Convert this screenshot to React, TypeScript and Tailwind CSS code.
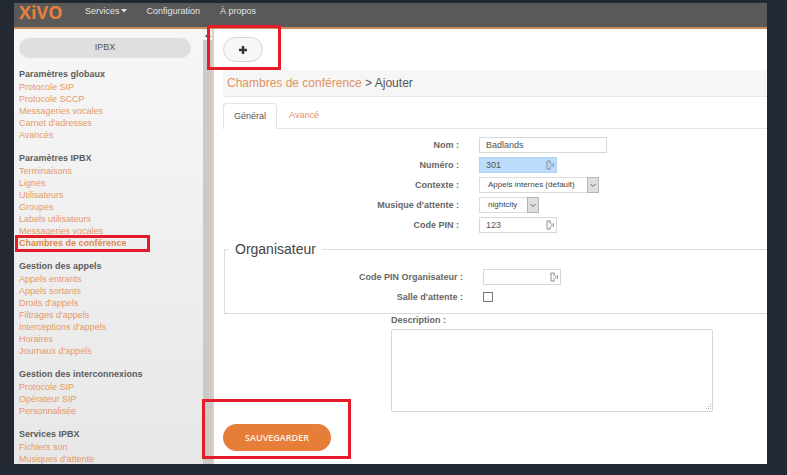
import type { ReactNode } from "react";

const menu = [
  {
    title: "Paramètres globaux",
    links: ["Protocole SIP", "Protocole SCCP", "Messageries vocales", "Carnet d'adresses", "Avancés"],
  },
  {
    title: "Paramètres IPBX",
    links: [
      "Terminaisons",
      "Lignes",
      "Utilisateurs",
      "Groupes",
      "Labels utilisateurs",
      "Messageries vocales",
      "Chambres de conférence",
    ],
  },
  {
    title: "Gestion des appels",
    links: [
      "Appels entrants",
      "Appels sortants",
      "Droits d'appels",
      "Filtrages d'appels",
      "Interceptions d'appels",
      "Horaires",
      "Journaux d'appels",
    ],
  },
  { title: "Gestion des interconnexions", links: ["Protocole SIP", "Opérateur SIP", "Personnalisée"] },
  { title: "Services IPBX", links: ["Fichiers son", "Musiques d'attente"] },
];

const ACTIVE = "Chambres de conférence";

function Row({ id, label, children }: { id: string; label: string; children: ReactNode }) {
  return (
    <div className="flex h-5 items-center">
      <label htmlFor={id} className="w-64 shrink-0 pt-0.5 pr-5 text-right text-[9px] font-bold text-[#666]">
        {label}
      </label>
      {children}
    </div>
  );
}

function Keypad({ id, value, active }: { id: string; value: string; active?: boolean }) {
  return (
    <div className="relative w-[78px]">
      <input
        id={id}
        type="text"
        defaultValue={value}
        className={
          active
            ? "block h-4 w-full border border-[#b4d3f2] bg-[#bbdcfb] px-1.5 text-[9px] text-[#555] outline-none"
            : "block h-4 w-full border border-[#d8d8d8] bg-white px-1.5 text-[9px] text-[#555] outline-none"
        }
      />
      <svg
        viewBox="0 0 8 10"
        className="pointer-events-none absolute top-[3px] right-[3px] h-[10px] w-2"
        fill="none"
        stroke="#8a8f96"
        aria-hidden="true"
      >
        <path d="M4.5 1H1v8h3.5M4 1v2M4 7.5V9" />
        <path d="M3.5 3.2h1L6.5 5 4.5 6.8h-1M7.4 3v4" strokeWidth="0.9" />
      </svg>
    </div>
  );
}

function Picker({ id, value, wide }: { id: string; value: string; wide?: boolean }) {
  return (
    <div className={wide ? "relative w-[120px]" : "relative w-[60px]"}>
      <select
        id={id}
        className="block h-4 w-full appearance-none border border-[#dcdcdc] bg-white pr-3 pl-2 text-[8px] leading-[14px] text-[#444] outline-none"
      >
        <option>{value}</option>
      </select>
      <span className="pointer-events-none absolute inset-y-0 right-0 flex w-3 items-center justify-center border border-[#b5b5b5] bg-[#dedede]">
        <svg viewBox="0 0 8 5" className="h-[5px] w-2" fill="none" stroke="#666" aria-hidden="true">
          <path d="M1.5 1 4 3.5 6.5 1" />
        </svg>
      </span>
    </div>
  );
}

export default function App() {
  return (
    <div className="flex min-h-screen flex-col bg-[#232933] pt-[3px] pr-5 pb-[11px] pl-3.5 font-['Liberation_Sans',Arial,sans-serif] text-[#555]">
      <header className="flex h-[26px] items-start border-b-2 border-[#c98a5c] bg-[#595959] pl-[5px]">
        <a href="#accueil" className="w-[66px] font-['Open_Sans',sans-serif] text-[18px] leading-[18px] font-bold text-[#e8803c]">
          XiVO
        </a>
        <nav className="flex gap-5 text-[9px] leading-[16px] text-[#e4e4e4]">
          <button type="button" className="flex items-center gap-px">
            Services
            <svg viewBox="0 0 6 4" className="h-1 w-1.5" fill="currentColor" aria-hidden="true">
              <path d="M0 0h6L3 3.5z" />
            </svg>
          </button>
          <a href="#configuration">Configuration</a>
          <a href="#apropos">À propos</a>
        </nav>
      </header>

      <div className="flex flex-1 bg-white">
        <aside className="flex w-[200px] shrink-0 border-r-2 border-[#e3cdb8] bg-linear-to-b from-[#f7f7f7] to-[#e7e7e7]">
          <div className="flex-1 pt-[9px] pl-[5px]">
            <button
              type="button"
              className="mb-[9px] block h-5 w-[172px] rounded-full bg-[#dfdfdf] text-center text-[9px] text-[#555]"
            >
              IPBX
            </button>
            {menu.map((group) => (
              <section key={group.title} className="mb-2.5 last:-mb-px">
                <h2 className="text-[9px] leading-[14px] font-bold text-[#5c5c5c]">{group.title}</h2>
                <ul className="text-[9px] leading-3 text-[#e59a68]">
                  {group.links.map((link) => (
                    <li key={link} className="relative">
                      <a href="#menu" className={link === ACTIVE ? "font-bold text-[#dd8850]" : ""}>
                        {link}
                      </a>
                      {link === ACTIVE && (
                        <span className="pointer-events-none absolute -top-0.5 -left-1 h-[17px] w-[135px] border-3 border-[#e31b2b]" />
                      )}
                    </li>
                  ))}
                </ul>
              </section>
            ))}
          </div>
          <div className="w-[9px] bg-[#cacaca]">
            <div className="flex h-[11px] items-center justify-center bg-[#f1f1f1]">
              <svg viewBox="0 0 6 4" className="h-1 w-1.5" fill="#444" aria-hidden="true">
                <path d="M0 4h6L3 0z" />
              </svg>
            </div>
          </div>
        </aside>

        <main className="min-w-0 flex-1 pl-[9px]">
          <div className="flex h-[41px] pt-2">
            <div className="relative h-[25px]">
              <button
                type="button"
                aria-label="Ajouter"
                className="flex h-[25px] w-10 items-center justify-center rounded-full border border-[#d5d5d5] bg-[#f7f7f7]"
              >
                <svg viewBox="0 0 8 8" className="size-2" fill="#333" aria-hidden="true">
                  <path d="M2.8 0h2.4v2.8H8v2.4H5.2V8H2.8V5.2H0V2.8h2.8z" />
                </svg>
              </button>
              <span className="pointer-events-none absolute -top-3 -left-4 h-[45px] w-[74px] border-3 border-[#e31b2b]" />
            </div>
          </div>

          <h1 className="h-[27px] border-b border-[#e8e8e8] bg-[#f6f6f6] pl-1 text-[12px] leading-[26px] text-[#555]">
            <a href="#chambres" className="text-[#e0935f]">
              Chambres de conférence
            </a>{" "}
            &gt; Ajouter
          </h1>

          <div className="mt-1.5 flex h-[26px] border-b border-[#e6e6e6] text-[9px]">
            <button
              type="button"
              className="-mb-px w-[54px] rounded-t-sm border border-b-0 border-[#e2e2e2] bg-white text-[#555]"
            >
              Général
            </button>
            <button type="button" className="w-[54px] text-[#e0935f]">
              Avancé
            </button>
          </div>

          <form onSubmit={(e) => e.preventDefault()}>
            <div className="pt-1.5">
              <Row id="nom" label="Nom :">
                <input
                  id="nom"
                  type="text"
                  defaultValue="Badlands"
                  className="h-4 w-32 border border-[#d8d8d8] bg-white px-1.5 text-[9px] text-[#555] outline-none"
                />
              </Row>
              <Row id="numero" label="Numéro :">
                <Keypad id="numero" value="301" active />
              </Row>
              <Row id="contexte" label="Contexte :">
                <Picker id="contexte" value="Appels internes (default)" wide />
              </Row>
              <Row id="musique" label="Musique d'attente :">
                <Picker id="musique" value="nightcity" />
              </Row>
              <Row id="pin" label="Code PIN :">
                <Keypad id="pin" value="123" />
              </Row>
            </div>

            <fieldset className="mt-1 ml-px border border-r-0 border-[#dcdcdc] pb-1.5 pl-0.5">
              <legend className="ml-0.5 px-1.5 text-[14px] leading-5 text-[#444]">Organisateur</legend>
              <div className="pt-2">
                <Row id="pin-organisateur" label="Code PIN Organisateur :">
                  <Keypad id="pin-organisateur" value="" />
                </Row>
                <Row id="salle" label="Salle d'attente :">
                  <input
                    id="salle"
                    type="checkbox"
                    className="size-2.5 appearance-none border border-[#777] bg-white checked:bg-[#777]"
                  />
                </Row>
              </div>
            </fieldset>

            <div className="pl-42">
              <label htmlFor="description" className="block h-[15px] text-[9px] leading-3 font-bold text-[#666]">
                Description :
              </label>
              <div className="relative w-[322px] max-w-full">
                <textarea
                  id="description"
                  className="block h-[83px] w-full resize-none rounded-xs border border-[#d8d8d8] bg-white outline-none"
                />
                <svg
                  viewBox="0 0 8 8"
                  className="pointer-events-none absolute right-px bottom-px size-2"
                  fill="#b4b4b4"
                  aria-hidden="true"
                >
                  <path d="M6 1h1v1H6zM4 3h1v1H4zM6 3h1v1H6zM2 5h1v1H2zM4 5h1v1H4zM6 5h1v1H6z" />
                </svg>
              </div>
            </div>

            <div className="mt-3 flex">
              <div className="relative">
                <button
                  type="submit"
                  className="block h-[27px] w-[108px] rounded-full bg-[#e67e39] font-['Open_Sans',sans-serif] text-[9px] font-semibold text-[#fff3e6]"
                >
                  SAUVEGARDER
                </button>
                <span className="pointer-events-none absolute -top-[25px] -left-[21px] h-[60px] w-[149px] border-3 border-[#e31b2b]" />
              </div>
            </div>
          </form>
        </main>
      </div>
    </div>
  );
}
